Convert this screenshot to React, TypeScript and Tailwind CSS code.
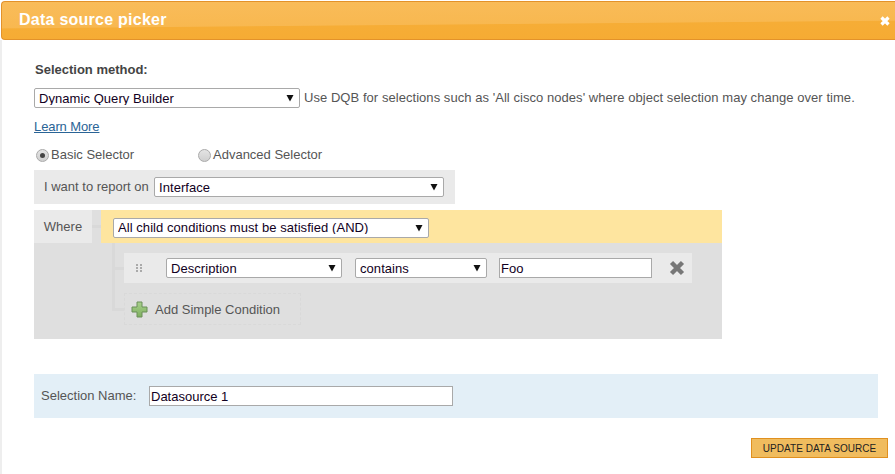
// App.tsx
import React from 'react';

// --- Small form helpers ---
function Select({ value, options, className }: { value: string; options?: string[]; className: string }) {
  return (
    <div className={`relative shrink-0 ${className}`}>
      <select
        defaultValue={value}
        className="block h-full w-full appearance-none rounded-[2px] border border-[#a9a9a9] bg-white pl-[4px] text-[13px] leading-none tracking-[0.06px] text-[#110022] outline-none"
      >
        {(options ?? [value]).map((o) => (
          <option key={o}>{o}</option>
        ))}
      </select>
      <svg className="pointer-events-none absolute right-[6px] top-[6px]" width="8" height="8" viewBox="0 0 8 8">
        <path d="M0.5 1 H7.5 L4 7.5 Z" fill="#111" />
      </svg>
    </div>
  );
}

function Radio({ checked, label, className }: { checked?: boolean; label: string; className: string }) {
  return (
    <label className={`flex items-center gap-[2px] text-[13px] text-[#555] ${className}`}>
      <span className="flex h-[13px] w-[13px] items-center justify-center rounded-full border border-[#aaa] bg-gradient-to-b from-[#e4e4e4] to-[#cfcfcf]">
        {checked && <span className="h-[5px] w-[5px] rounded-full bg-[#444]" />}
      </span>
      {label}
    </label>
  );
}

export default function App() {
  return (
    <div className="h-[474px] w-[895px] overflow-hidden bg-white font-['Liberation_Sans',Arial,sans-serif]">
      {/* --- Title bar --- */}
      <div className="ml-[1px] mt-[1px] flex h-[39px] items-center justify-between rounded-l-[4px] border-y border-l border-[#e3922a] bg-[linear-gradient(179.5deg,#f9bc5a_0%,#f8b850_58%,#f6ad36_60%,#f6ab33_100%)] pl-[17px] pr-[5px]">
        <span className="relative top-[-1px] text-[16px] font-bold tracking-[0.25px] text-white">Data source picker</span>
        <svg width="10" height="10" viewBox="0 0 10 10">
          <path d="M1.5 1.5 L8.5 8.5 M8.5 1.5 L1.5 8.5" stroke="#fff" strokeWidth="3.2" />
        </svg>
      </div>

      {/* --- Body --- */}
      <div className="h-[434px] border-l-2 border-[#eeeeee] pl-[32px]">
        <div className="pt-[23px] text-[13px] font-bold leading-[14px] text-[#444]">
          <span className="pl-[1px]">Selection method:</span>
        </div>

        <div className="mt-[11px] flex h-[20px] items-center">
          <Select value="Dynamic Query Builder" className="h-[20px] w-[266px]" />
          <span className="ml-[4px] whitespace-nowrap text-[13px] tracking-[0.05px] text-[#555]">
            Use DQB for selections such as 'All cisco nodes' where object selection may change over time.
          </span>
        </div>

        <a href="#" className="mt-[12px] block w-fit text-[13px] leading-[14px] tracking-[-0.1px] text-[#2a6496] underline">
          Learn More
        </a>

        <div className="mt-[14px] flex h-[14px] items-center pl-[2px]">
          <Radio checked label="Basic Selector" className="w-[162px]" />
          <Radio label="Advanced Selector" className="" />
        </div>

        {/* --- Report target --- */}
        <div className="mt-[8px] flex h-[34px] w-[421px] items-center bg-[#eaeaea] pl-[10px]">
          <span className="w-[110px] text-[13px] text-[#555]">I want to report on</span>
          <Select value="Interface" className="h-[20px] w-[290px]" />
        </div>

        {/* --- Query builder --- */}
        <div className="mt-[6px] flex h-[129px] w-[688px] bg-[#dfdfdf]">
          <div className="flex h-[33px] w-[58px] items-center justify-center bg-[#eaeaea] pt-[1px] text-[13px] text-[#555]">
            Where
          </div>
          <div className="relative h-[129px] flex-1 pl-[9px]">
            <div className="absolute left-0 top-[15px] h-[3px] w-[9px] bg-[#d9d9d9]" />
            <div className="flex h-[33px] items-center bg-[#fee59f] pl-[12px] pt-[2px]">
              <Select value="All child conditions must be satisfied (AND)" className="h-[20px] w-[316px]" />
            </div>

            {/* tree lines */}
            <div className="absolute left-[20px] top-[33px] h-[67px] w-[3px] bg-[#d9d9d9]" />
            <div className="absolute left-[20px] top-[57px] h-[3px] w-[12px] bg-[#d9d9d9]" />
            <div className="absolute left-[20px] top-[98px] h-[3px] w-[12px] bg-[#d9d9d9]" />

            <div className="relative ml-[23px] mt-[10px] flex h-[30px] w-[568px] items-center bg-[#eaeaea]">
              <div className="ml-[12px] grid w-[7px] grid-cols-2 gap-[1px]">
                {[0, 1, 2, 3, 4, 5].map((i) => (
                  <span key={i} className="h-[2px] w-[2px] bg-[#aaa]" />
                ))}
              </div>
              <Select value="Description" className="ml-[23px] h-[20px] w-[176px]" />
              <Select value="contains" className="ml-[13px] h-[20px] w-[132px]" />
              <input
                defaultValue="Foo"
                className="ml-[12px] h-[20px] w-[153px] border border-[#a9a9a9] bg-white pl-[1px] text-[13px] text-[#110022] outline-none"
              />
              <svg width="16" height="16" viewBox="0 0 16 16" className="ml-[17px]">
                <path d="M2.5 2.5 L13.5 13.5 M13.5 2.5 L2.5 13.5" stroke="#777" strokeWidth="4.4" />
              </svg>
            </div>

            <div className="relative ml-[23px] mt-[10px] flex h-[32px] w-[177px] items-center border border-dashed border-[#d9d9d9] pl-[6px]">
              <svg width="17" height="17" viewBox="0 0 17 17">
                <defs>
                  <linearGradient id="plusFill" x1="0" y1="0" x2="0" y2="1">
                    <stop offset="0" stopColor="#a8d08c" />
                    <stop offset="1" stopColor="#7fb060" />
                  </linearGradient>
                </defs>
                <path
                  d="M6 1 H11 V6 H16 V11 H11 V16 H6 V11 H1 V6 H6 Z"
                  fill="url(#plusFill)"
                  stroke="#6a8f58"
                  strokeWidth="1"
                />
              </svg>
              <span className="ml-[7px] pt-[1px] text-[13px] text-[#555]">Add Simple Condition</span>
            </div>
          </div>
        </div>

        {/* --- Selection name --- */}
        <div className="mt-[35px] flex h-[44px] w-[844px] items-center bg-[#e3eff7] pl-[7px]">
          <span className="w-[108px] text-[13px] text-[#555]">Selection Name:</span>
          <input
            defaultValue="Datasource 1"
            className="h-[20px] w-[304px] border border-[#a9a9a9] bg-white pl-[1px] text-[13px] text-[#110022] outline-none"
          />
        </div>

        <div className="mt-[20px] flex w-[854px] justify-end">
          <button className="h-[20px] w-[137px] border border-[#e0901f] bg-[#f0bc5e] text-[10px] tracking-[0.03px] text-[#222]">
            UPDATE DATA SOURCE
          </button>
        </div>
      </div>
    </div>
  );
}
